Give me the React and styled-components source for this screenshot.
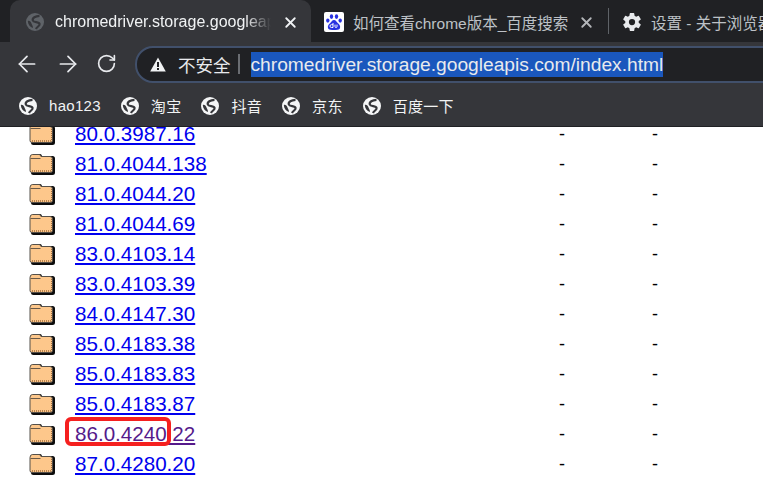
import React from "react";
import styled, { createGlobalStyle } from "styled-components";
import { X, ArrowLeft, ArrowRight, RotateCw } from "lucide-react";
import { IoSettingsSharp } from "react-icons/io5";

const versions = [
  "80.0.3987.16",
  "81.0.4044.138",
  "81.0.4044.20",
  "81.0.4044.69",
  "83.0.4103.14",
  "83.0.4103.39",
  "84.0.4147.30",
  "85.0.4183.38",
  "85.0.4183.83",
  "85.0.4183.87",
  "86.0.4240.22",
  "87.0.4280.20",
];

const bookmarks = ["hao123", "淘宝", "抖音", "京东", "百度一下"];

const Globe = ({ color = "#f4f5f6", cut = "#35363a" }) => (
  <svg width="18" height="18" viewBox="0 0 18 18">
    <circle cx="9" cy="9" r="9" fill={color} />
    <path
      d="M13.500 2.800 C9.500 3 6 4.800 6.800 7.500 C7.500 9.800 13 8.600 13.600 11 C14 13 11 13.500 10 16"
      fill="none"
      stroke={cut}
      strokeWidth="2.200"
    />
    <path d="M1.800 8 C3.500 7.400 5 9 5.500 10.500 C6 12 7 12.500 7 15 C4 14 2 11.500 1.800 8 Z" fill={cut} />
  </svg>
);

const Baidu = () => (
  <svg width="20" height="20" viewBox="0 0 20 20">
    <rect width="20" height="20" rx="2" fill="#fff" />
    <g fill="#2932e1">
      <ellipse cx="7.500" cy="4.600" rx="1.700" ry="2.300" />
      <ellipse cx="12.500" cy="4.600" rx="1.700" ry="2.300" />
      <ellipse cx="3.800" cy="8.600" rx="1.700" ry="2.100" />
      <ellipse cx="16.200" cy="8.600" rx="1.700" ry="2.100" />
      <path d="M10 8c-2 0-2.600 2-4 3.200C4.400 12.600 3.400 14 4 16c.5 1.700 2.400 2.200 6 1.900 3.600.3 5.500-.2 6-1.900.6-2-.4-3.400-2-4.800C12.600 10 12 8 10 8Z" />
    </g>
    <path
      d="M9 11v4.500H7.400a1.300 1.300 0 0 1 0-2.800H9M11 12.600v1.900c0 .7.500 1 1 1s1-.3 1-1v-1.900"
      fill="none"
      stroke="#fff"
      strokeWidth="1"
    />
  </svg>
);

const Warning = () => (
  <svg width="16" height="15" viewBox="0 0 16 15">
    <path d="M8 0.500 L15.800 14.500 H0.200 Z" fill="#f1f3f4" />
    <rect x="7" y="5" width="2" height="5" fill="#202124" />
    <rect x="7" y="11" width="2" height="2" fill="#202124" />
  </svg>
);

const Folder = () => (
  <svg width="26" height="22" viewBox="0 0 26 22">
    <path
      d="M3 3 Q3 1 5 1 H11 Q12.500 1 13 3 H23.500 Q26 3 26 5.500 V19.500 Q26 22 23.500 22 H4.500 Q2 22 2 19.500 Z"
      fill="#0c0c0c"
    />
    <path
      d="M1 4.500 Q1 1.500 3.500 1.500 H10 Q11.500 1.500 12 3.500 H21 Q23.500 3.500 23.500 6 V17.500 Q23.500 19.500 21.500 19.500 H3 Q1 19.500 1 17.500 Z"
      fill="#fdc78b"
      stroke="#55504a"
      strokeWidth="1"
    />
    <path d="M1.500 5.500 H11.500" stroke="#6b5a48" strokeWidth="1" fill="none" />
    <path d="M3 18 H22.500" stroke="#a5703d" strokeWidth="1.500" strokeDasharray="1 1" fill="none" />
    <path d="M22.500 6 V17" stroke="#a5703d" strokeWidth="1" strokeDasharray="1 1" fill="none" />
  </svg>
);

export default function App() {
  return (
    <>
      <GlobalStyle />
      <Page>
        <TabStrip>
          <ActiveTab>
            <Globe color="#5f6368" cut="#35363a" />
            <TabTitle $fade>chromedriver.storage.googleapis.com</TabTitle>
            <CloseIcon size={17} strokeWidth={2.6} color="#f1f3f4" />
          </ActiveTab>
          <Tab $width={297}>
            <Baidu />
            <TabTitle $dim>如何查看chrome版本_百度搜索</TabTitle>
            <CloseIcon size={17} strokeWidth={2.6} color="#b4b6b9" />
          </Tab>
          <Divider />
          <Tab $width={170}>
            <IoSettingsSharp size={20} color="#e8eaed" />
            <TabTitle $dim>设置 - 关于浏览器</TabTitle>
          </Tab>
        </TabStrip>
        <Toolbar>
          <NavButtons>
            <ArrowLeft size={26} strokeWidth={1.600} color="#e8eaed" />
            <ArrowRight size={26} strokeWidth={1.600} color="#e8eaed" />
            <RotateCw size={21} strokeWidth={1.900} color="#e8eaed" />
          </NavButtons>
          <Omnibox>
            <Warning />
            <Insecure>不安全</Insecure>
            <Sep />
            <Url>chromedriver.storage.googleapis.com/index.html</Url>
          </Omnibox>
        </Toolbar>
        <BookmarkBar>
          {bookmarks.map((name) => (
            <Bookmark key={name}>
              <Globe />
              <span>{name}</span>
            </Bookmark>
          ))}
        </BookmarkBar>
        <Listing>
          {versions.map((v) => (
            <Row key={v}>
              <Folder />
              <VersionLink href="#" $visited={v === "86.0.4240.22"}>
                {v}
              </VersionLink>
              <Cell>-</Cell>
              <Cell>-</Cell>
            </Row>
          ))}
          <Highlight />
        </Listing>
      </Page>
    </>
  );
}

const GlobalStyle = createGlobalStyle`
  html, body {
    margin: 0;
    padding: 0;
    background: #fff;
  }
`;

const Page = styled.div`
  width: 763px;
  height: 481px;
  overflow: hidden;
  display: flex;
  flex-direction: column;
  font-family: "Liberation Sans", "Noto Sans CJK SC", sans-serif;
`;

const TabStrip = styled.div`
  height: 42px;
  flex: none;
  background: #202124;
  display: flex;
  align-items: flex-end;
  padding-left: 10px;
  overflow: hidden;
`;

const Tab = styled.div`
  width: ${(p) => p.$width}px;
  height: 42px;
  flex: none;
  box-sizing: border-box;
  padding: 2px 13px 0;
  display: flex;
  align-items: center;
  gap: 9px;
`;

const ActiveTab = styled(Tab)`
  width: 301px;
  background: #35363a;
  border-radius: 10px 10px 0 0;
  padding: 2px 12px 0 16px;
  gap: 11px;
`;

const TabTitle = styled.div`
  flex: 1;
  min-width: 0;
  overflow: hidden;
  white-space: nowrap;
  font-size: ${(p) => (p.$dim ? 15.5 : 16)}px;
  color: ${(p) => (p.$dim ? "#bdc1c6" : "#f1f3f4")};
  ${(p) => p.$fade && "mask-image: linear-gradient(to right, #000 88%, transparent 100%);"}
`;

const CloseIcon = styled(X)`
  flex: none;
`;

const Divider = styled.div`
  width: 1px;
  height: 26px;
  margin-bottom: 8px;
  flex: none;
  background: #5f6368;
`;

const Toolbar = styled.div`
  height: 43px;
  flex: none;
  background: #35363a;
  display: flex;
  align-items: center;
  padding-left: 14px;
`;

const NavButtons = styled.div`
  width: 121px;
  flex: none;
  display: flex;
  align-items: center;
  gap: 15px;
`;

const Omnibox = styled.div`
  flex: 1;
  height: 37px;
  box-sizing: border-box;
  margin: 1px -40px 0 0;
  padding-left: 13px;
  background: #202124;
  border: 2px solid #41506b;
  border-radius: 18px;
  display: flex;
  align-items: center;
`;

const Insecure = styled.span`
  margin-left: 12px;
  font-size: 17.500px;
  color: #e8eaed;
`;

const Sep = styled.div`
  width: 2px;
  height: 20px;
  margin: 0 11px 0 7px;
  background: #6a6d72;
`;

const Url = styled.span`
  font-size: 19.200px;
  line-height: 25px;
  color: #e8eaed;
  background: #1a57bd;
  white-space: nowrap;
`;

const BookmarkBar = styled.div`
  height: 42px;
  flex: none;
  background: #35363a;
  display: flex;
  align-items: center;
  padding-left: 19px;
  gap: 20px;
  border-bottom: 1px solid #202124;
  box-sizing: border-box;
`;

const Bookmark = styled.div`
  display: flex;
  align-items: center;
  gap: 12px;
  font-size: 15px;
  letter-spacing: 0.3px;
  color: #f1f3f4;
`;

const Listing = styled.div`
  position: relative;
  flex: 1;
  min-height: 0;
  overflow: hidden;
  padding-left: 29px;
  > :first-child {
    margin-top: -8px;
  }
`;

const Row = styled.div`
  height: 30px;
  display: grid;
  grid-template-columns: 46px 484px 93px 20px;
  align-items: center;
`;

const VersionLink = styled.a`
  font-size: 20.600px;
  color: ${(p) => (p.$visited ? "#551a8b" : "#0000ee")};
  text-decoration: underline;
  justify-self: start;
`;

const Cell = styled.span`
  font-size: 18px;
  color: #000;
`;

const Highlight = styled.div`
  position: absolute;
  left: 65px;
  top: 290px;
  width: 106px;
  height: 29px;
  box-sizing: border-box;
  border: 4px solid #f5201f;
  border-radius: 6px;
`;
